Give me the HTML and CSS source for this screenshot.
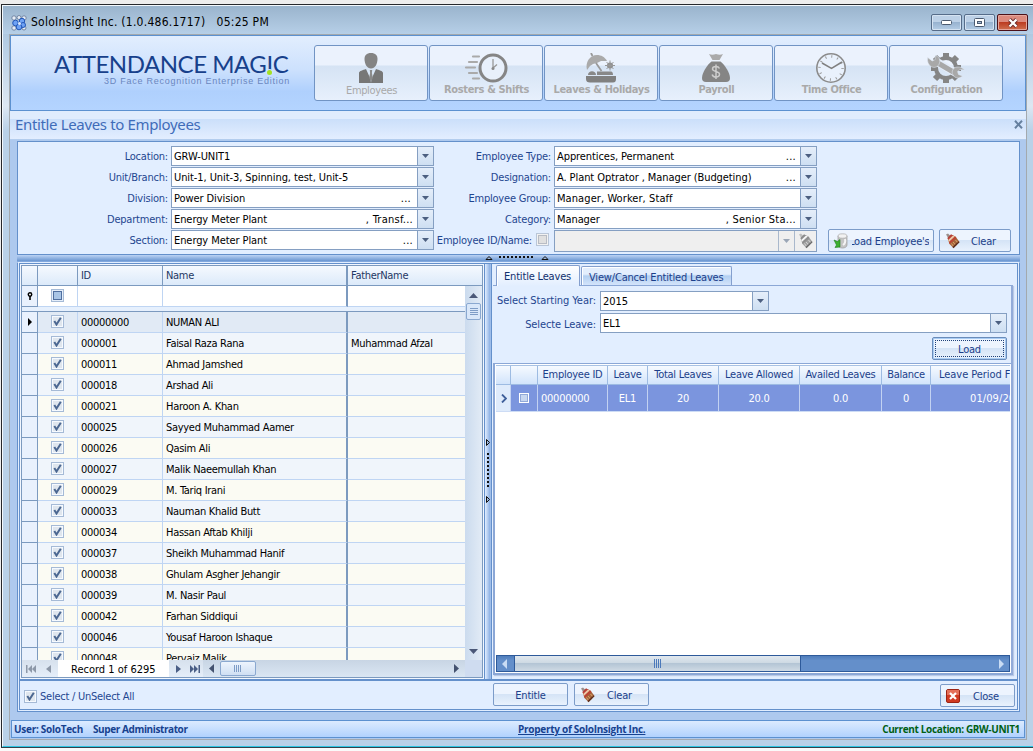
FILE: index.html
```html
<!DOCTYPE html>
<html lang="en">
<head>
<meta charset="utf-8">
<title>SoloInsight Inc.</title>
<link rel="stylesheet" href="styles.css">
</head>
<body>
<svg class="defs" width="0" height="0">
  <defs>
    <symbol id="broom" viewBox="0 0 16 16">
      <path d="M1 1.500l2-1 3 3-2.500 2z" fill="#9b8f8c"/>
      <path d="M2.500 5l3.500-3.500 4.500 2L14.500 9 8.500 15 4.500 11z" fill="#a5643c"/>
      <path d="M2.500 5l3.500-3.500 2.500 1L4 7.500z" fill="#b8403a"/>
      <path d="M3.200 7L8 2.500l1.800 1L4 9z" fill="#efc9a8"/>
      <path d="M4 9l6-5.500 1.500 1.500-7 6z" fill="#bd4334"/>
      <path d="M8 9l3 3.500M10.500 7l2.500 3M6.500 10.500l2.500 3.500" stroke="#dba468" fill="none"/>
      <path d="M7.500 14l1 1.200 6-6-.8-1z" fill="#5a2c1c"/>
    </symbol>
    <symbol id="tick" viewBox="0 0 9 9">
      <path d="M1.300 4l2.200 3.500L7.800.8" fill="none" stroke="#4b6791" stroke-width="2"/>
    </symbol>
    <symbol id="down" viewBox="0 0 7 4"><path d="M0 0h7L3.500 4z"/></symbol>
  </defs>
</svg>
<div class="window">
 <div class="frame">
  <div class="titlebar">
    <svg class="appicon" width="16" height="16" viewBox="0 0 16 16">
      <g fill="#e7edf6" stroke="#6b7f9d" stroke-width=".9"><circle cx="3" cy="3" r="2.200"/><circle cx="8" cy="2.500" r="2"/><circle cx="13" cy="3" r="2.200"/><circle cx="3" cy="13" r="2.200"/><circle cx="13" cy="13" r="2"/></g>
      <g fill="#6ea2f4" stroke="#2458b8"><circle cx="4.500" cy="8" r="2.800"/><circle cx="11" cy="6" r="2.700"/><circle cx="12" cy="10" r="2.500"/><circle cx="8" cy="12" r="2.800"/></g>
      <circle cx="8.500" cy="8.500" r="1.500" fill="#dce9ff"/>
    </svg>
    <span class="apptitle">SoloInsight Inc. (1.0.486.1717)&nbsp;&nbsp; 05:25 PM</span>
    <div class="winbtns">
      <span class="wb"><svg width="11" height="5" viewBox="0 0 11 5"><rect x=".5" y=".5" width="10" height="4" rx="1" fill="#fff" stroke="#4b5a70"/></svg></span>
      <span class="wb"><svg width="11" height="9" viewBox="0 0 11 9"><rect x=".5" y=".5" width="10" height="8" rx="1" fill="#fff" stroke="#4b5a70"/><rect x="3.500" y="3.500" width="4" height="2" fill="#a9bfd8" stroke="#4b5a70"/></svg></span>
      <span class="wb red"><svg width="12" height="10" viewBox="0 0 12 10"><path d="M2.500 1.500l7 7M9.500 1.500l-7 7" stroke="#6b2a2a" stroke-width="4"/><path d="M2.500 1.500l7 7M9.500 1.500l-7 7" stroke="#fff" stroke-width="2.300"/></svg></span>
    </div>
  </div>
  <div class="client">
   <div class="header">
    <div class="brand">
      <div class="logo">ATTENDANCE MAG<span class="bang">I</span>C</div>
      <div class="tagline">3D Face Recognition Enterprise Edition</div>
    </div>
    <div class="toolbar">
      <div class="tool plain">
        <svg width="32" height="30" viewBox="0 0 32 30"><path d="M16 0c4.500 0 6.500 2.500 6.500 6 0 5-2.500 9.500-6.500 9.500S9.500 11 9.500 6C9.500 2.500 11.500 0 16 0z" fill="#848484"/><path d="M4 30V20c0-2 4-3 7-4l4.500 10L16 30zM28 30V20c0-2-4-3-7-4l-4.500 10L16 30z" fill="#777"/><path d="M14.800 17h2.400l-.3 3 1 5-1.900 3-1.900-3 1-5z" fill="#8a8a8a"/></svg>
        <span>Employees</span></div>
      <div class="tool">
        <svg width="44" height="30" viewBox="0 0 44 30"><circle cx="29" cy="15" r="13" fill="#e8f0fb" stroke="#858585" stroke-width="3"/><path d="M29 6v9l4-3.500" fill="none" stroke="#999" stroke-width="1.300"/><circle cx="29" cy="15.500" r="1.500" fill="#888"/><path d="M9 3.500h6M5 9h8M2 14.500h9M5 20h8M9 25.500h6" stroke="#aaa" stroke-width="2.200" stroke-linecap="round"/></svg>
        <span>Rosters &amp; Shifts</span></div>
      <div class="tool">
        <svg width="34" height="30" viewBox="0 0 34 30"><path d="M3 17C1 9 6 2 13 2c4 0 8 2 10 6l-6 0-4 2-4 1-3 2z" fill="#aaa"/><path d="M7 0l1.500 3M12 10l5.500 8" stroke="#999" stroke-width="1.800"/><circle cx="26" cy="12.500" r="3" fill="#8a8a8a"/><path d="M26 7.500v10M21 12.500h10M22.500 9l7 7M29.500 9l-7 7" stroke="#999" stroke-width="1"/><path d="M4 22c0-5 8-5 8 0zM13 18.500h14q2 0 2 3.500H13z" fill="#888"/><path d="M2 23h30v3q0 3.500-3 3.500H6q-4 0-4-3.500z" fill="#808080"/></svg>
        <span>Leaves &amp; Holidays</span></div>
      <div class="tool">
        <svg width="30" height="30" viewBox="0 0 30 30"><path d="M8 1q3 1.500 7 0 4 1.500 7 0l-3.500 6h-7z" fill="#aaa"/><path d="M10.500 8.500h9C24 12 29 20 29 25q0 4-4 4H5q-4 0-4-4c0-5 5-13 9.500-16.500z" fill="#858585"/><path d="M18.500 15.500q-1-2-3.500-2-3.500 0-3.500 2.500c0 3 7 2 7 5 0 2-1.500 3-3.500 3-2.500 0-3.500-1-3.800-2.500M15 11.500v14.500" fill="none" stroke="#ccc" stroke-width="1.500"/></svg>
        <span>Payroll</span></div>
      <div class="tool">
        <svg width="30" height="30" viewBox="0 0 30 30"><circle cx="15" cy="15" r="14.200" fill="#e9f1fc" stroke="#8b8b8b" stroke-width="1.600"/><circle cx="15" cy="15" r="11.500" fill="none" stroke="#999" stroke-width="2.500" stroke-dasharray="1 5.020"/><path d="M6 10l9.500 5.500L26 9" fill="none" stroke="#808080" stroke-width="1.500"/></svg>
        <span>Time Office</span></div>
      <div class="tool">
        <svg width="38" height="30" viewBox="0 0 38 30"><circle cx="19" cy="15" r="10" fill="none" stroke="#858585" stroke-width="4"/><path d="M19 0v4M19 26v4M8 4l3 3M30 4l-3 3M8 26l3-3M30 26l-3-3M30 15h4M4 15h4" stroke="#858585" stroke-width="6"/><path d="M10 9l19 11" stroke="#e3ecf8" stroke-width="8"/><path d="M10 9.500l18 10.500" stroke="#a8a8a8" stroke-width="5"/><path d="M.7 4.500l4.500 3.500 3-1.500L8 2.500c4 1 5.500 4 4.500 7.500-1 4-5 5.500-8.500 3.500C1.500 12 0 8.500.7 4.500zM37.500 17l-4.500-.5-2.500 2 1 3 4 1.500c-3 3-7.500 2.500-9.500-1-2-3.500 0-7.500 4-8 3-.3 6 1 7.500 3z" fill="#a8a8a8" stroke="#e3ecf8" stroke-width=".5"/></svg>
        <span>Configuration</span></div>
    </div>
   </div>
   <div class="caption"><span>Entitle Leaves to Employees</span>
     <svg width="9" height="9" viewBox="0 0 9 9"><path d="M1 .8l7 7.400M8 .8L1 8.200" stroke="#66809f" stroke-width="2"/></svg></div>
   <div class="workspace">
    <div class="filters">
      <div class="fcol left">
        <label class="lb">Location:</label><div class="combo"><span>GRW-UNIT1</span><b><svg><use href="#down"/></svg></b></div>
        <label class="lb">Unit/Branch:</label><div class="combo"><span>Unit-1, Unit-3, Spinning, test, Unit-5</span><b><svg><use href="#down"/></svg></b></div>
        <label class="lb">Division:</label><div class="combo"><span>Power Division</span><i class="shift">...</i><b><svg><use href="#down"/></svg></b></div>
        <label class="lb">Department:</label><div class="combo"><span>Energy Meter Plant</span><i>, Transf...</i><b><svg><use href="#down"/></svg></b></div>
        <label class="lb">Section:</label><div class="combo"><span>Energy Meter Plant</span><i>...</i><b><svg><use href="#down"/></svg></b></div>
      </div>
      <div class="fcol right">
        <label class="lb">Employee Type:</label><div class="combo"><span>Apprentices, Permanent</span><i>...</i><b><svg><use href="#down"/></svg></b></div>
        <label class="lb">Designation:</label><div class="combo"><span>A. Plant Optrator , Manager (Budgeting)</span><i>...</i><b><svg><use href="#down"/></svg></b></div>
        <label class="lb">Employee Group:</label><div class="combo wide"><span>Manager, Worker, Staff</span><b><svg><use href="#down"/></svg></b></div>
        <label class="lb">Category:</label><div class="combo"><span>Manager</span><i>, Senior Sta...</i><b><svg><use href="#down"/></svg></b></div>
        <label class="lb idn">Employee ID/Name:<span class="cb off"></span></label><div class="combo off"><span></span><b><svg><use href="#down"/></svg></b><em><svg class="broom grey"><use href="#broom"/></svg></em></div>
      </div>
      <div class="factions">
        <div class="btn loademp"><svg class="db" width="16" height="16" viewBox="0 0 16 16"><path d="M5 3v9c0 4 9 4 9 0V3z" fill="#c4c4c4" stroke="#9b9b9b" stroke-width=".7"/><ellipse cx="9.500" cy="3" rx="4.500" ry="2.200" fill="#f2f2f2" stroke="#a9a9a9" stroke-width=".7"/><path d="M10 12q3-2 2-6" stroke="#f4f4f4" stroke-width="2" fill="none"/><path d="M1 7l3.500 1.500L7 6.500V14l-5 .5 1.500-2.500z" fill="#3db030" stroke="#1e7d1d" stroke-width=".6"/></svg><span class="cut"><span>Load Employee's</span></span></div>
        <div class="btn"><svg class="broom"><use href="#broom"/></svg><span class="lbl">Clear</span></div>
      </div>
    </div>
    <div class="hsplit"><svg width="64" height="6" viewBox="0 0 64 6"><path d="M1 4.500h6L4 1.500zM57 4.500h6L60 1.500z" fill="#9db8df" stroke="#111"/><path d="M14 2h35" stroke="#111" stroke-width="2" stroke-dasharray="2 2"/></svg></div>
    <div class="lower"><div class="inner">
      <div class="panes">
        <div class="leftpane"><div class="grid">
          <div class="ghead"><span></span><span></span><span>ID</span><span>Name</span><span class="last">FatherName</span></div>
          <div class="gmain">
           <div class="gbody">
            <div class="grow filter"><span><svg width="6" height="8" viewBox="0 0 6 8"><circle cx="3" cy="2.500" r="1.700" fill="#fff" stroke="#000" stroke-width="1.500"/><path d="M3 4v4" stroke="#000" stroke-width="1.600"/></svg></span><span><span class="cb mixed"></span></span><span></span><span></span><span></span></div>
            <div class="gap"></div>
            <div class="grow cur"><span><svg width="4" height="8" viewBox="0 0 4 8"><path d="M0 0l4 4-4 4z"/></svg></span><span><span class="cb"><svg><use href="#tick"/></svg></span></span><span>00000000</span><span>NUMAN ALI</span><span></span></div>
            <div class="grow"><span></span><span><span class="cb"><svg><use href="#tick"/></svg></span></span><span>000001</span><span>Faisal Raza Rana</span><span>Muhammad Afzal</span></div>
            <div class="grow alt"><span></span><span><span class="cb"><svg><use href="#tick"/></svg></span></span><span>000011</span><span>Ahmad Jamshed</span><span></span></div>
            <div class="grow"><span></span><span><span class="cb"><svg><use href="#tick"/></svg></span></span><span>000018</span><span>Arshad Ali</span><span></span></div>
            <div class="grow alt"><span></span><span><span class="cb"><svg><use href="#tick"/></svg></span></span><span>000021</span><span>Haroon A. Khan</span><span></span></div>
            <div class="grow"><span></span><span><span class="cb"><svg><use href="#tick"/></svg></span></span><span>000025</span><span>Sayyed Muhammad Aamer</span><span></span></div>
            <div class="grow alt"><span></span><span><span class="cb"><svg><use href="#tick"/></svg></span></span><span>000026</span><span>Qasim Ali</span><span></span></div>
            <div class="grow"><span></span><span><span class="cb"><svg><use href="#tick"/></svg></span></span><span>000027</span><span>Malik Naeemullah Khan</span><span></span></div>
            <div class="grow alt"><span></span><span><span class="cb"><svg><use href="#tick"/></svg></span></span><span>000029</span><span>M. Tariq Irani</span><span></span></div>
            <div class="grow"><span></span><span><span class="cb"><svg><use href="#tick"/></svg></span></span><span>000033</span><span>Nauman Khalid Butt</span><span></span></div>
            <div class="grow alt"><span></span><span><span class="cb"><svg><use href="#tick"/></svg></span></span><span>000034</span><span>Hassan Aftab Khilji</span><span></span></div>
            <div class="grow"><span></span><span><span class="cb"><svg><use href="#tick"/></svg></span></span><span>000037</span><span>Sheikh Muhammad Hanif</span><span></span></div>
            <div class="grow alt"><span></span><span><span class="cb"><svg><use href="#tick"/></svg></span></span><span>000038</span><span>Ghulam Asgher Jehangir</span><span></span></div>
            <div class="grow"><span></span><span><span class="cb"><svg><use href="#tick"/></svg></span></span><span>000039</span><span>M. Nasir Paul</span><span></span></div>
            <div class="grow alt"><span></span><span><span class="cb"><svg><use href="#tick"/></svg></span></span><span>000042</span><span>Farhan Siddiqui</span><span></span></div>
            <div class="grow"><span></span><span><span class="cb"><svg><use href="#tick"/></svg></span></span><span>000046</span><span>Yousaf Haroon Ishaque</span><span></span></div>
            <div class="grow alt"><span></span><span><span class="cb"><svg><use href="#tick"/></svg></span></span><span>000048</span><span>Pervaiz Malik</span><span></span></div>
           </div>
           <div class="vscroll"><svg width="9" height="5" viewBox="0 0 9 5"><path d="M0 5h9L4.500 0z" fill="#4b5878"/></svg><div class="thumb"><svg width="8" height="8" viewBox="0 0 8 8"><path d="M0 .5h8M0 2.500h8M0 4.500h8M0 6.500h8" stroke="#7e9cc6"/></svg></div><div class="fill"></div><svg width="9" height="5" viewBox="0 0 9 5"><path d="M0 0h9L4.500 5z" fill="#4b5878"/></svg></div>
          </div>
          <div class="navbar">
            <div class="nbtn a"><svg width="10" height="8" viewBox="0 0 10 8" fill="#8d98a8"><path d="M0 0h1.500v8H0zM6 0v8L2 4zM10 0v8L6 4z"/></svg><svg width="5" height="8" viewBox="0 0 5 8" fill="#8d98a8"><path d="M5 0v8L0 4z"/></svg></div>
            <div class="rec">Record 1 of 6295</div>
            <div class="nbtn b"><svg width="5" height="8" viewBox="0 0 5 8" fill="#4b5f86"><path d="M0 0v8l5-4z"/></svg><svg width="10" height="8" viewBox="0 0 10 8" fill="#4b5f86"><path d="M8.500 0H10v8H8.500zM0 0v8l4-4zM4 0v8l4-4z"/></svg></div>
            <div class="htrack"><svg width="5" height="9" viewBox="0 0 5 9" fill="#44526f"><path d="M5 0v9L0 4.500z"/></svg><div class="hthumb"><svg width="8" height="7" viewBox="0 0 8 7"><path d="M.5 0v7M2.500 0v7M4.500 0v7M6.500 0v7" stroke="#7e9cc6"/></svg></div><div class="fill"></div><svg width="5" height="9" viewBox="0 0 5 9" fill="#44526f"><path d="M0 0v9l5-4.500z"/></svg></div>
            <div class="corner"></div>
          </div>
        </div></div>
        <div class="vsplit"><svg width="6" height="64" viewBox="0 0 6 64"><path d="M1.500.5v6L4.500 3.500zM1.500 57.500v6L4.500 60.500z" fill="#9db8df" stroke="#111"/><path d="M3 14v35" stroke="#111" stroke-width="2" stroke-dasharray="2 2"/></svg></div>
        <div class="rightpane">
          <div class="tabs"><div class="tab on">Entitle Leaves</div><div class="tab">View/Cancel Entitled Leaves</div></div>
          <div class="tabbody">
            <div class="form">
              <div class="frow"><label class="lb">Select Starting Year:</label><div class="combo yr"><span>2015</span><b><svg><use href="#down"/></svg></b></div></div>
              <div class="frow two"><label class="lb">Selecte Leave:</label><div class="combo lv"><span>EL1</span><b><svg><use href="#down"/></svg></b></div></div>
              <div class="frow three"><div class="btn focus"><span>Load</span></div></div>
            </div>
            <div class="grid2">
              <div class="g2head"><span></span><span></span><span>Employee ID</span><span>Leave</span><span>Total Leaves</span><span>Leave Allowed</span><span>Availed Leaves</span><span>Balance</span><span class="pl">Leave Period From</span></div>
              <div class="g2row"><span><svg width="6" height="9" viewBox="0 0 6 9"><path d="M1 .5l4 4-4 4" fill="none" stroke="#3f5f9a" stroke-width="1.800"/></svg></span><span><i class="sq"></i></span><span class="lf">00000000</span><span>EL1</span><span>20</span><span>20.0</span><span>0.0</span><span>0</span><span class="pl2">01/09/2015</span></div>
              <div class="fill"></div>
              <div class="hs2"><span class="ar"><svg width="5" height="10" viewBox="0 0 5 10" fill="#c9dcf4"><path d="M5 0v10L0 5z"/></svg></span><div class="th2"><svg width="8" height="9" viewBox="0 0 8 9"><path d="M.5 0v9M2.500 0v9M4.500 0v9M6.500 0v9" stroke="#4b79bb"/></svg></div><div class="fill"></div><svg class="rt" width="5" height="10" viewBox="0 0 5 10" fill="#c9dcf4"><path d="M0 0v10l5-5z"/></svg></div>
            </div>
          </div>
        </div>
      </div>
      <div class="rule"></div>
      <div class="bottombar">
        <span class="cb"><svg><use href="#tick"/></svg></span><span class="selall">Select / UnSelect All</span>
        <div class="btn ent"><span>Entitle</span></div>
        <div class="btn clr"><svg class="broom"><use href="#broom"/></svg><span class="lbl">Clear</span></div>
        <div class="btn cls"><svg width="14" height="14" viewBox="0 0 14 14"><rect x=".5" y=".5" width="13" height="13" rx="1.500" fill="#d03a22" stroke="#9c2414"/><path d="M1 1h12v5H1z" fill="#e4705a"/><path d="M4 4l6 6M10 4l-6 6" stroke="#fff" stroke-width="2.200"/></svg><span class="lbl">Close</span></div>
      </div>
    </div></div>
   </div>
   <div class="status"><span class="s1">User: SoloTech</span><span class="s2">Super Administrator</span><span class="s3">Property of SoloInsight Inc.</span><span class="s4">Current Location: GRW-UNIT1</span></div>
  </div>
 </div>
</div>
</body>
</html>
```

FILE: styles.css
```css
* { box-sizing: border-box; }
body { margin: 0; width: 1033px; height: 751px; overflow: hidden; background: linear-gradient(#ededed 0 700px, #fafafa 748px); font: 11px/13px "DejaVu Sans Condensed", "DejaVu Sans", sans-serif; font-stretch: condensed; letter-spacing: -.3px; color: #000; white-space: nowrap; }
.defs { position: absolute; }
svg { display: block; flex: none; }
.fill { flex: 1; }

.window { margin: 4px 0 0 1px; height: 744px; border: 1px solid #26282c; border-right: 0; border-bottom-color: #33424c; }
.frame { height: 742px; border: 1px solid #f4f9fd; border-right: 0; border-bottom-color: #2cc5e2; background: linear-gradient(#9ab4cd 0, #b2cbe3 32px, #dde7f2 100px, #b9d1e8 125px); }
.titlebar { height: 28px; display: flex; align-items: center; padding: 5px 4px 0 8px; background: linear-gradient(#9ab4cd, #b6cfe7); }
.apptitle { margin-left: 4px; font-size: 12px; letter-spacing: .26px; flex: 1; }
.winbtns { display: flex; gap: 2px; margin-right: 1px; }
.wb { width: 31px; height: 17px; display: flex; align-items: center; justify-content: center; border: 1px solid #566c89; border-radius: 2px; box-shadow: inset 0 0 0 1px #d5e3f2; background: linear-gradient(#bdd1e7 48%, #98b3d0 50%, #b4cde6); }
.wb.red { border-color: #4c1119; box-shadow: inset 0 0 0 1px #e5a69d; background: linear-gradient(#dc8a7e 48%, #bc3c22 50%, #d07050); }

.client { margin-left: 6px; width: 1018px; height: 706px; border: 1px solid #a3a9ae; background: #aec9ee; }
.header { height: 76px; border: 1px solid #5c91d0; display: flex; background: linear-gradient(#e2eefe, #cde1fd 45%, #afd0fd 75%, #b4d4ff); }
.brand { width: 303px; padding: 16px 0 0 43px; }
.logo { font: 24px/24px Lato, sans-serif; letter-spacing: -.48px; color: #17408b; }
.bang { position: relative; }
.bang::after { content: ""; position: absolute; left: 1px; bottom: 3px; width: 5px; height: 5px; border-radius: 3px; background: #a5e021; box-shadow: 0 0 0 1px #cbe2ff; }
.tagline { margin: -1px 0 0 50px; font: 9px/12px "Liberation Sans", sans-serif; letter-spacing: .75px; color: #6a87bf; }
.toolbar { display: flex; gap: 1px; padding-top: 9px; }
.tool { width: 114px; height: 56px; border: 1px solid #7194c4; border-radius: 3px; display: flex; flex-direction: column; align-items: center; padding-top: 7px; background: linear-gradient(#ebf2fd 0 19px, #d5e3f4 20px, #e7f0fc); }
.tool span { font-weight: bold; line-height: 14px; color: #a9a9a9; letter-spacing: -.35px; padding-left: 1px; }
.tool.plain span { font-weight: normal; font-size: 11px; margin-top: 1px; letter-spacing: -.35px; }
.caption { height: 29px; display: flex; justify-content: space-between; padding: 4px 3px 0 5px; border-bottom: 1px solid #b3cdee; background: linear-gradient(#e0ecfd 0 8px, #cbdffa 8px, #e3eeff); font: 15px/18px "Noto Sans", sans-serif; letter-spacing: -.35px; color: #3f6cb9; }
.caption svg { margin-top: 5px; }

.workspace { height: 580px; padding: 1px 5px 0 7px; }
.filters { width: 1003px; height: 114px; border: 1px solid #6490cb; background: #e2eeff; display: flex; padding-top: 4px; }
.fcol { display: grid; grid-auto-rows: 20px; row-gap: 1px; }
.fcol.left { grid-template-columns: 153px 263px; }
.fcol.right { grid-template-columns: 120px 263px; }
.fcol.right .combo.off { height: 22px; }
.lb { color: #1f4690; text-align: right; padding: 4px 3px 0 0; letter-spacing: -.2px; }
.idn { display: flex; padding-right: 5px; justify-content: flex-end; }
.idn .cb { margin: -1px 0 0 4px; }
.combo { height: 20px; border: 1px solid #859fc2; background: #fff; display: flex; }
.combo span { flex: 1; padding: 3px 0 0 2px; letter-spacing: -.08px; }
.combo.wide span { letter-spacing: .08px; }
.combo i { font-style: normal; padding: 3px 4px 0 0; letter-spacing: .25px; }
.combo i.shift { padding-right: 6px; }
.combo b { width: 16px; border-left: 1px solid #859fc2; background: linear-gradient(#e5eefa, #cedff2); display: flex; align-items: center; justify-content: center; }
.combo b svg { width: 7px; height: 4px; fill: #4c5f80; }
.combo.off { background: #efefef; }
.combo.off b, .combo em { background: #efefef; border-color: #a9b8cc; }
.combo.off b svg { fill: #9aa6b6; }
.combo em { width: 22px; border-left: 1px solid #a9b8cc; padding: 2px 3px; }
.broom { width: 16px; height: 16px; }
.grey { filter: grayscale(1) brightness(1.200); opacity: .75; }
.factions { display: flex; gap: 5px; padding: 83px 0 0 11px; }
.btn { width: 75px; height: 23px; flex: none; display: flex; align-items: center; justify-content: center; border: 1px solid #7c9cc9; border-radius: 2px; background: linear-gradient(#edf4fe 48%, #d5e4f6 50%, #e9f2fd); color: #1c3f8a; letter-spacing: -.2px; padding-top: 1px; }
.factions .btn { width: 72px; justify-content: flex-start; padding-left: 5px; }
.factions .btn.loademp { width: 106px; padding-left: 4px; }
.factions .lbl { margin-left: 10px; }
.cut { overflow: hidden; margin-left: 3px; }
.cut span { display: block; margin-left: -3px; letter-spacing: -.22px; }
.hsplit { width: 1003px; height: 7px; background: linear-gradient(#bcd3f4, #6f9ad3 80%, #8cb0e2); padding-left: 468px; }

.lower { width: 1003px; height: 450px; border: 1px solid #6490cb; border-top-color: #e2eeff; background: #e2eeff; padding: 0 1px 1px; }
.inner { height: 447px; border: 1px solid #6490cb; background: #e2eeff; }
.panes { height: 415px; display: flex; }
.leftpane { width: 464px; padding: 1px; background: #f2f7ff; }
.grid { width: 462px; height: 413px; border: 1px solid #7c9abf; background: #fff; display: flex; flex-direction: column; }
.ghead { height: 20px; display: flex; border-bottom: 1px solid #7c9abf; background: linear-gradient(#f5f9fe, #dceafa); color: #1f3864; }
.ghead span { padding: 3px 0 0 3px; border-right: 1px solid #7c9abf; }
.ghead span.last { flex: 1; border-right: 0; }
.ghead span:nth-child(1), .grow > span:nth-child(1) { width: 16px; }
.ghead span:nth-child(2), .grow > span:nth-child(2) { width: 40px; }
.ghead span:nth-child(3), .grow > span:nth-child(3) { width: 85px; }
.ghead span:nth-child(4), .grow > span:nth-child(4) { width: 185px; border-right: 2px solid #7c9abf; }
.gmain { height: 374px; display: flex; }
.gbody { width: 443px; overflow: hidden; }
.grow { height: 21px; display: flex; background: #f0f5fb; }
.grow > span { border-right: 1px solid #bfd5f3; border-bottom: 1px solid #bfd5f3; padding: 4px 0 0 3px; }
.grow > span:nth-child(1) { background: #e9f1fd; border-color: #7c9abf; display: flex; align-items: center; justify-content: center; padding: 0; }
.grow > span:nth-child(2) { padding: 3px 0 0 13px; }
.grow > span:nth-child(5) { width: 117px; border-right: 0; }
.grow.alt { background: #fbfbf3; }
.grow.cur { background: #e1eaf5; }
.grow.filter { background: #fff; }
.gap { height: 5px; background: #e6f0fd; border-bottom: 1px solid #7c9abf; }
.cb { width: 13px; height: 13px; flex: none; display: block; border: 1px solid #a5bad6; background: #dfe6ee; box-shadow: inset 0 0 0 1px #f6faff; padding: 1px; }
.cb svg { width: 9px; height: 9px; }
.cb.mixed { background: #a9c5e6; border-color: #a5bad6; box-shadow: inset 0 0 0 1px #e5eefa, inset 0 0 0 2px #506f9f; }
.cb.off { border-color: #b9c6d8; background: #e0e0e0; box-shadow: inset 0 0 0 1px #f2f2f2, inset 0 0 0 2px #b8bcc4; }
.vscroll { width: 17px; display: flex; flex-direction: column; align-items: center; padding: 7px 0 6px; background: linear-gradient(90deg, #cbdbee, #e2ebf6); }
.thumb { margin-top: 5px; width: 15px; height: 17px; border: 1px solid #8aa8d0; border-radius: 2px; background: #d9e7f9; display: flex; align-items: center; justify-content: center; }
.navbar { height: 17px; display: flex; background: linear-gradient(#c8d5e4, #dae6f3); }
.nbtn { display: flex; align-items: center; background: linear-gradient(#d7e1ed, #e5eef9); }
.nbtn.a { width: 36px; gap: 10px; padding-left: 4px; }
.nbtn.b { width: 34px; gap: 9px; padding-left: 7px; }
.rec { width: 111px; background: #fff; padding: 3px 0 0 13px; letter-spacing: 0; }
.htrack { flex: 1; display: flex; align-items: center; padding: 0 6px 0 6px; }
.hthumb { margin-left: 6px; width: 36px; height: 15px; border: 1px solid #8aa8d0; border-radius: 2px; background: linear-gradient(#edf4fd, #cfdff3); display: flex; align-items: center; justify-content: center; }
.corner { width: 17px; background: #cfdcf0; }
.vsplit { width: 8px; border: solid #6490cb; border-width: 0 1px; background: linear-gradient(90deg, #e2eeff, #8fb2e4 80%, #a9c5ee); padding-top: 175px; }

.rightpane { width: 525px; background: #e2eeff; }
.tabs { height: 22px; display: flex; gap: 1px; padding: 1px 0 0 4px; align-items: flex-end; position: relative; }
.tab { height: 19px; width: 151px; padding: 4px 0 0 7px; border: 1px solid #849fce; border-bottom: 0; border-radius: 2px 2px 0 0; background: linear-gradient(#e3eefd 40%, #b3cff1 50%, #d3e4fb); color: #1c3f8a; box-shadow: inset 1px 1px #fff; margin-bottom: 1px; letter-spacing: -.18px; }
.tab.on { height: 21px; width: 84px; padding: 4px 0 0 7px; background: linear-gradient(#fff, #e2eeff); color: #11306e; margin-bottom: 0; }
.tabbody { margin: -1px 0 0 1px; width: 520px; height: 390px; border-top: 1px solid #8ba7d6; border-right: 2px solid #92abd9; box-shadow: 1px 1px 1px #b9c9e6; }
.form { height: 77px; padding-top: 5px; }
.frow { display: flex; }
.frow .lb { width: 107px; padding: 3px 4px 0 0; letter-spacing: -.06px; }
.frow.two { margin-top: 2px; }
.frow.two .lb { padding-top: 5px; letter-spacing: -.12px; }
.frow.three { margin: 4px 4px 0 0; justify-content: flex-end; }
.yr { width: 169px; }
.lv { width: 407px; }
.btn.focus { border-color: #6a8cba; box-shadow: inset 0 0 0 1px #a9ccf4; outline: 1px dotted #1f4179; outline-offset: -4px; padding-top: 2px; }
.grid2 { height: 312px; border: solid #8ba7d6; border-width: 1px 0 2px 2px; background: #fff; display: flex; flex-direction: column; padding: 1px 1px 1px; }
.g2head, .g2row { display: grid; grid-template-columns: 15px 27px 70px 40px 71px 81px 82px 49px 79px; width: 514px; overflow: hidden; }
.g2head { height: 20px; border-top: 1px solid #a8c2e4; border-bottom: 1px solid #9dbbe2; background: linear-gradient(#f6faff, #d2e4fb); color: #1c3f8a; }
.g2head span { text-align: center; padding-top: 2px; border-right: 1px solid #9dbbe2; letter-spacing: -.26px; }
.g2head .pl { text-align: left; padding-left: 8px; border: 0; overflow: hidden; letter-spacing: -.05px; }
.g2row { height: 27px; background: #7b95de; color: #fff; border-bottom: 1px solid #cddcf5; }
.g2row > span { text-align: center; padding-top: 7px; border-right: 1px solid #c2d2f2; letter-spacing: -.25px; overflow: hidden; }
.g2row > span:first-child { background: #dfebfb; padding: 9px 0 0 5px; }
.g2row .lf { text-align: left; padding-left: 3px; }
.g2row .pl2 { text-align: left; padding-left: 39px; border: 0; letter-spacing: .1px; }
.sq { display: block; margin: 1px 0 0 8px; width: 10px; height: 10px; background: #c8d7f0; border: 1px solid #fff; box-shadow: inset 0 0 0 1px #91a9d9; }
.hs2 { height: 17px; width: 514px; border: 1px solid #2e5a9a; background: linear-gradient(#4f7dbb, #648fca 30%); display: flex; align-items: center; }
.ar { width: 17px; padding-left: 5px; }
.th2 { width: 287px; height: 15px; border: solid #2e5a9a; border-width: 0 1px; background: linear-gradient(#e1e8ee, #cdd9e3 48%, #b4c5d5 50%, #cfdae4); display: flex; align-items: center; justify-content: center; }
.rt { margin-right: 5px; }

.rule { height: 2px; background: #6490cb; }
.bottombar { height: 28px; display: flex; padding: 2px 2px 0 4px; }
.bottombar .cb { margin-top: 7px; }
.selall { width: 456px; flex: none; padding: 7px 0 0 3px; color: #1f4690; letter-spacing: -.25px; }
.btn.clr { margin-left: 6px; }
.btn.clr, .btn.cls { justify-content: flex-start; padding-left: 5px; }
.clr .lbl { margin-left: 11px; }
.btn.cls { margin: 1px 0 0 auto; }
.cls .lbl { margin-left: 13px; }
.status { margin: 0 1px; height: 18px; border: 1px solid #5c91d0; background: linear-gradient(#dcebff, #b1d2fe); display: flex; font: bold 10px/17px "Open Sans", sans-serif; letter-spacing: -.27px; color: #17428f; padding: 0 4px 0 2px; }
.s1 { width: 79px; }
.s2 { width: 425px; letter-spacing: -.4px; }
.s3 { text-decoration: underline; }
.s4 { margin-left: auto; color: #005f14; letter-spacing: -.35px; }
```
